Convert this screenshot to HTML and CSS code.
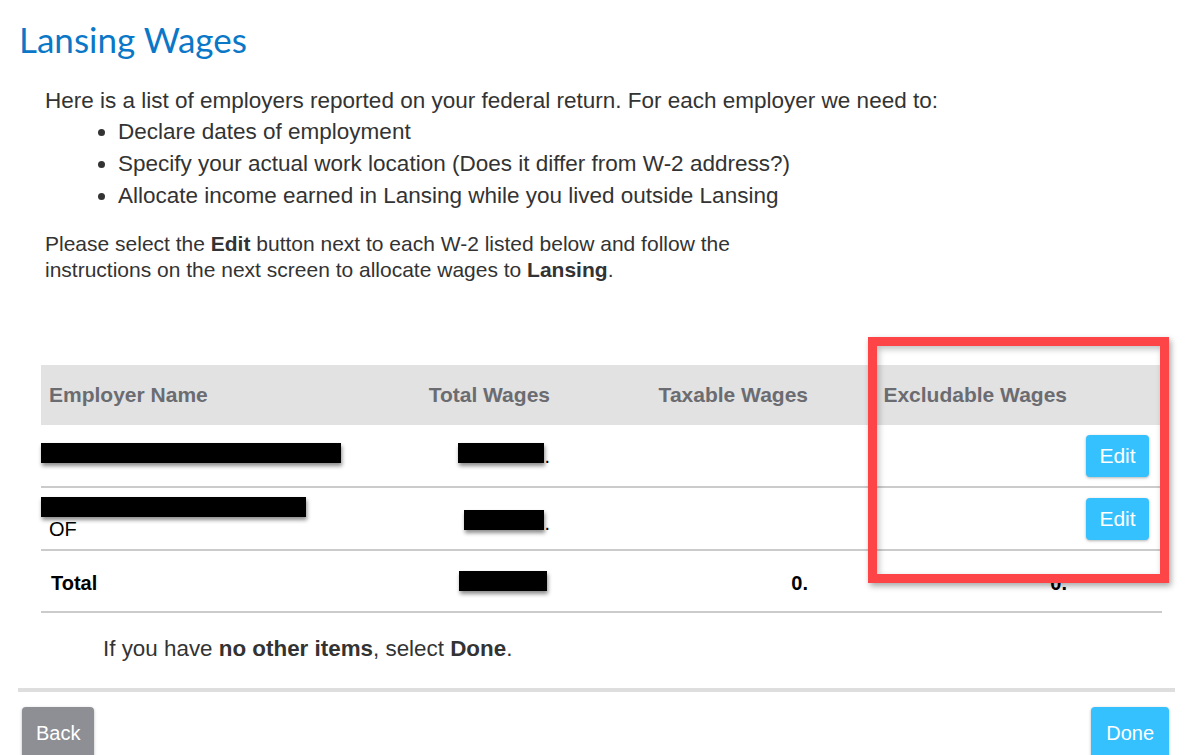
FILE: index.html
```html
<!DOCTYPE html>
<html lang="en">
<head>
    <meta charset="UTF-8">
    <meta name="viewport" content="width=device-width, initial-scale=1.0">
    <title>Lansing Wages</title>
    <link rel="stylesheet" href="styles.css">
</head>
<body>
    <main class="page">
        <h1 class="title">Lansing Wages</h1>

        <div class="intro">
            <p>Here is a list of employers reported on your federal return. For each employer we need to:</p>
            <ul class="steps">
                <li>Declare dates of employment</li>
                <li>Specify your actual work location (Does it differ from W-2 address?)</li>
                <li>Allocate income earned in Lansing while you lived outside Lansing</li>
            </ul>
        </div>

        <p class="instructions">Please select the <b>Edit</b> button next to each W-2 listed below and follow the<br>
            instructions on the next screen to allocate wages to <b>Lansing</b>.</p>

        <div class="table-wrap">
            <table class="wages">
                <colgroup>
                    <col class="col-name">
                    <col class="col-total">
                    <col class="col-taxable">
                    <col class="col-excl">
                    <col class="col-edit">
                </colgroup>
                <thead>
                    <tr>
                        <th class="left">Employer Name</th>
                        <th>Total Wages</th>
                        <th>Taxable Wages</th>
                        <th>Excludable Wages</th>
                        <th></th>
                    </tr>
                </thead>
                <tbody>
                    <tr>
                        <td class="left"><span class="redact redact-name1"></span></td>
                        <td><span class="redact redact-w1"></span>.</td>
                        <td></td>
                        <td></td>
                        <td class="edit-cell"><button class="btn btn-edit">Edit</button></td>
                    </tr>
                    <tr>
                        <td class="left"><span class="redact redact-name2"></span><div class="name-rest">OF</div></td>
                        <td><span class="redact redact-w2"></span>.</td>
                        <td></td>
                        <td></td>
                        <td class="edit-cell"><button class="btn btn-edit">Edit</button></td>
                    </tr>
                    <tr class="total-row">
                        <td class="left">Total</td>
                        <td><span class="redact redact-w3"></span></td>
                        <td>0.</td>
                        <td>0.</td>
                        <td></td>
                    </tr>
                </tbody>
            </table>
            <div class="highlight"></div>
        </div>

        <p class="done-note">If you have <b>no other items</b>, select <b>Done</b>.</p>

        <div class="footer">
            <button class="btn btn-back">Back</button>
            <button class="btn btn-done">Done</button>
        </div>
    </main>
</body>
</html>
```

FILE: styles.css
```css
body {
    margin: 0;
    background-color: #fff;
    font-family: "Liberation Sans", Arial, sans-serif;
    color: #333;
}
.page {
    padding: 0 22px 0 18px;
}
.title {
    margin: 0;
    padding: 18px 0 0 1px;
    font-family: Lato, "Open Sans", sans-serif;
    font-weight: 400;
    font-size: 35px;
    line-height: 42px;
    color: #0b77c7;
}
.intro {
    margin: 26px 0 0 27px;
    font-size: 22.5px;
    line-height: 32px;
}
.intro p {
    margin: 0;
    line-height: 30px;
}
.steps {
    margin: 0;
    padding-left: 73px;
}
.instructions {
    margin: 19px 0 0 27px;
    width: 700px;
    font-size: 21px;
    line-height: 26px;
}
.table-wrap {
    position: relative;
    margin: 82px 13px 0 23px;
}
.wages {
    width: 100%;
    table-layout: fixed;
    border-collapse: collapse;
    font-size: 20px;
}
.col-name { width: 359px; }
.col-total { width: 158px; }
.col-taxable { width: 258px; }
.col-excl { width: 259px; }
.col-edit { width: 87px; }
.wages th {
    height: 60px;
    padding: 0 8px;
    background-color: #e2e2e2;
    color: #6b6c71;
    text-align: right;
    font-size: 21px;
    font-weight: bold;
}
.wages td {
    height: 61px;
    padding: 0 8px;
    border-bottom: 2px solid #cbcbcb;
    text-align: right;
    color: #000;
}
.wages .left {
    text-align: left;
}
.wages td.edit-cell {
    padding-right: 13px;
}
.wages .total-row td {
    height: 56px;
    padding-top: 4px;
    font-weight: bold;
}
.wages .total-row td.left {
    padding-left: 10px;
}
.redact {
    display: inline-block;
    height: 20px;
    background-color: #000;
    box-shadow: 1px 3px 4px rgba(0, 0, 0, 0.45);
}
.redact-name1 { width: 300px; margin-left: -8px; }
.redact-name2 { width: 265px; margin-left: -8px; display: block; }
.redact-w1 { width: 86px; }
.redact-w2 { width: 80px; margin-top: 8px; }
.redact-w3 { width: 88px; margin-right: 3px; }
.name-rest {
    line-height: 24px;
}
.btn {
    border: none;
    border-radius: 4px;
    color: #fff;
    font-family: "Liberation Sans", Arial, sans-serif;
    cursor: pointer;
    box-shadow: 0 1px 3px rgba(0, 0, 0, 0.3);
}
.btn-edit {
    width: 63px;
    height: 42px;
    padding: 0;
    background-color: #35c1fd;
    font-size: 21px;
}
.highlight {
    position: absolute;
    left: 827px;
    top: -28px;
    width: 283px;
    height: 228px;
    border: 9px solid #fd4447;
    box-shadow: 2px 3px 6px rgba(0, 0, 0, 0.35), inset 2px 3px 6px rgba(0, 0, 0, 0.25);
}
.done-note {
    margin: 22px 0 0 85px;
    font-size: 22.4px;
    line-height: 28px;
}
.footer {
    display: flex;
    justify-content: space-between;
    margin-top: 25px;
    padding: 15px 6px 0 4px;
    border-top: 4px solid #dedede;
}
.btn-back {
    height: 52px;
    padding: 0 14px;
    background-color: #8d8f95;
    font-size: 20px;
}
.btn-done {
    height: 52px;
    padding: 0 15px;
    background-color: #35c1fd;
    font-size: 20px;
}
```
